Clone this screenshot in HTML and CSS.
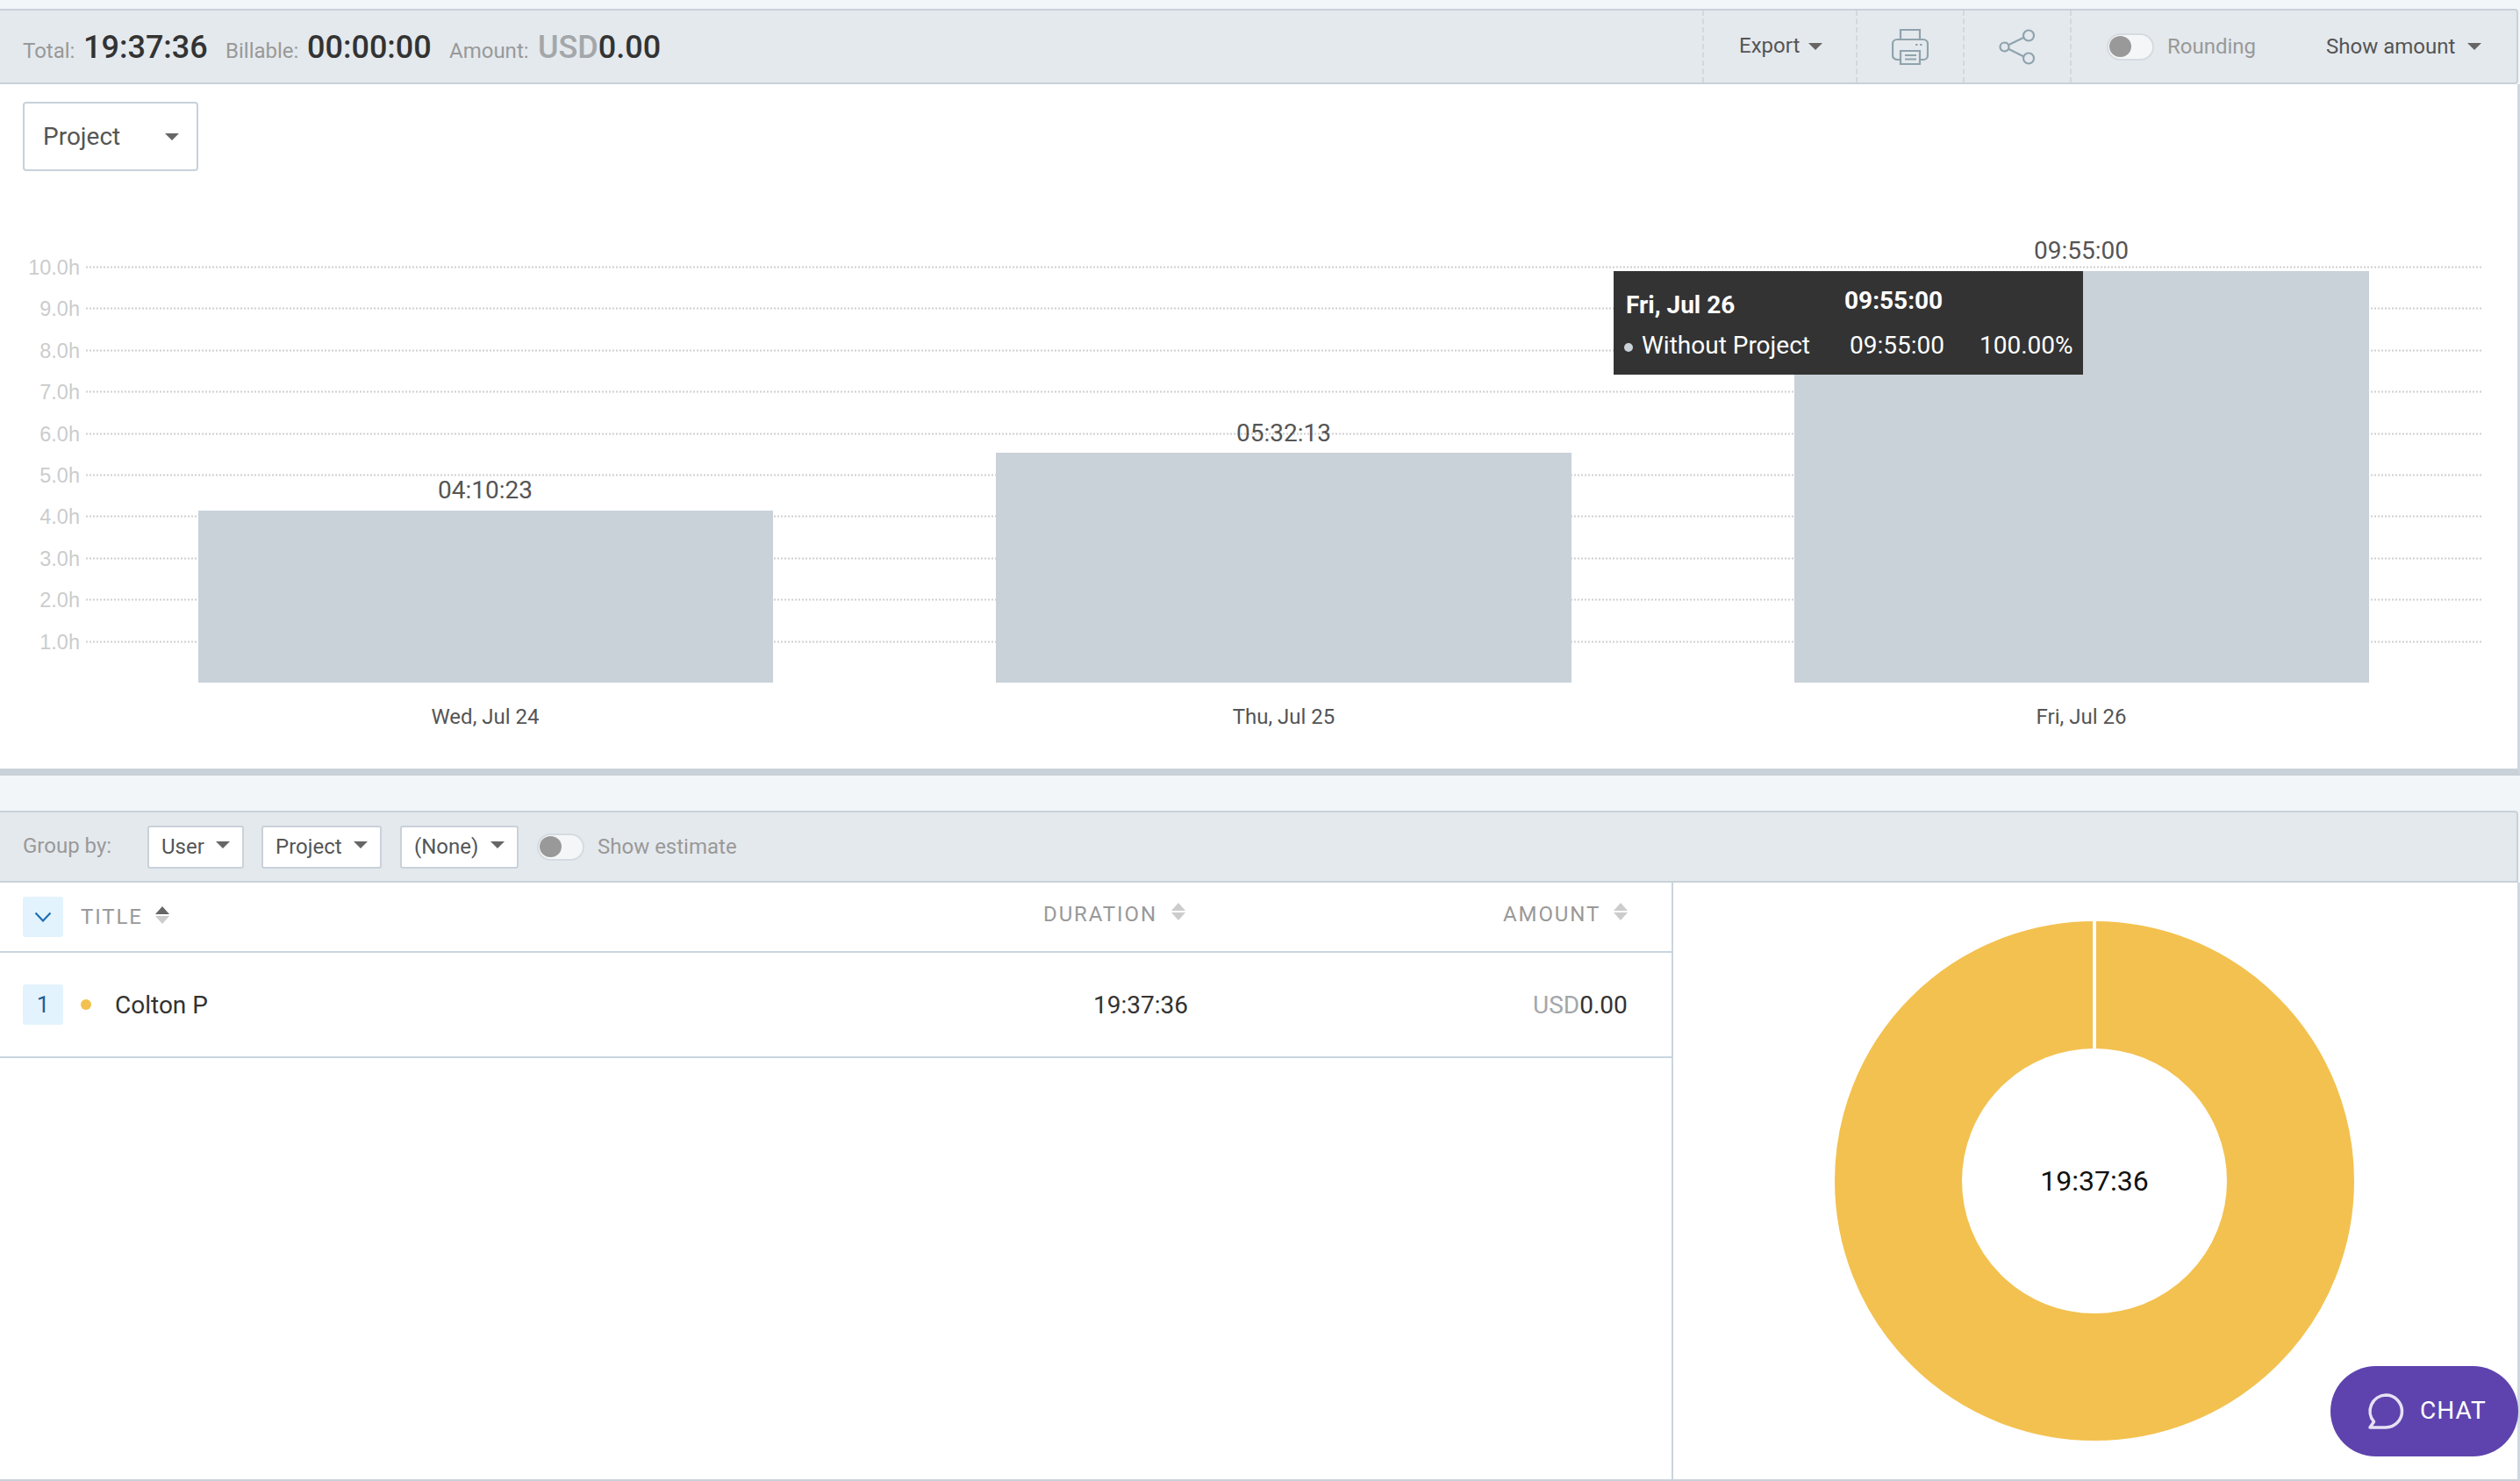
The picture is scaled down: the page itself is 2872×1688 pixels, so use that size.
FILE: index.html
```html
<!DOCTYPE html>
<html lang="en">
<head>
<meta charset="utf-8">
<title>Report</title>
<link rel="stylesheet" href="styles.css">
</head>
<body>
<div class="page">
  <header class="summary-bar">
    <div class="totals">
      <span class="lbl lbl-total">Total:</span><b class="val val-total">19:37:36</b>
      <span class="lbl lbl-bill">Billable:</span><b class="val val-bill">00:00:00</b>
      <span class="lbl lbl-amount">Amount:</span><b class="val val-amount"><span class="cur">USD</span>0.00</b>
    </div>
    <div class="tools">
      <div class="tool tool-export"><span class="export-text">Export</span><i class="caret caret-export"></i></div>
      <div class="tool tool-print">
        <svg class="ic" width="42" height="41" viewBox="-1 -1 42 41" fill="none" stroke="#8fa3ad" stroke-width="2.200">
          <path d="M9 11V0h22v11"/>
          <path d="M9 34H5a5 5 0 0 1-5-5V16a5 5 0 0 1 5-5h30a5 5 0 0 1 5 5v13a5 5 0 0 1-5 5h-4"/>
          <path d="M9 24h22v15H9z"/>
          <path d="M14 29h13M14 33.500h13M26 17h2.500M31 17h2.500"/>
        </svg>
      </div>
      <div class="tool tool-share">
        <svg class="ic" width="42" height="41" viewBox="-1 -1 42 41" fill="none" stroke="#8fa3ad" stroke-width="2.200">
          <circle cx="5.500" cy="19.500" r="5"/>
          <circle cx="33" cy="6.500" r="6"/>
          <circle cx="33" cy="32.500" r="6"/>
          <path d="M10.500 17 27.500 8.700M10.500 22 27.500 30.500"/>
        </svg>
      </div>
      <div class="tool-right">
        <span class="toggle"><i></i></span><span class="toggle-label">Rounding</span>
        <span class="show-amount">Show amount</span><i class="caret caret-show"></i>
      </div>
    </div>
  </header>

  <section class="chart-card">
    <div class="chart-select"><span>Project</span><i class="caret"></i></div>
    <svg class="chart" width="2868" height="680" viewBox="0 196 2868 680">
      <g class="grid">
        <path d="M98 304.500H2828M98 351.500H2828M98 399.500H2828M98 446.500H2828M98 494.500H2828M98 541.500H2828M98 588.500H2828M98 636.500H2828M98 683.500H2828M98 731.500H2828"/>
      </g>
      <g class="axis">
        <text x="91" y="313">10.0h</text>
        <text x="91" y="360">9.0h</text>
        <text x="91" y="408">8.0h</text>
        <text x="91" y="455">7.0h</text>
        <text x="91" y="503">6.0h</text>
        <text x="91" y="550">5.0h</text>
        <text x="91" y="597">4.0h</text>
        <text x="91" y="645">3.0h</text>
        <text x="91" y="692">2.0h</text>
        <text x="91" y="740">1.0h</text>
      </g>
      <rect class="bar" x="226" y="582" width="655" height="196"/>
      <rect class="bar" x="1135" y="516" width="656" height="262"/>
      <rect class="bar" x="2045" y="309" width="655" height="469"/>
      <g class="bar-val">
        <text x="553" y="568">04:10:23</text>
        <text x="1463" y="503">05:32:13</text>
        <text x="2372" y="295">09:55:00</text>
      </g>
      <g class="bar-cat">
        <text x="553" y="825">Wed, Jul 24</text>
        <text x="1463" y="825">Thu, Jul 25</text>
        <text x="2372" y="825">Fri, Jul 26</text>
      </g>
    </svg>
    <div class="tooltip">
      <div class="tt-row tt-head"><span class="tt-date">Fri, Jul 26</span><span class="tt-time">09:55:00</span></div>
      <div class="tt-row tt-body"><i class="tt-dot"></i><span class="tt-name">Without Project</span><span class="tt-time2">09:55:00</span><span class="tt-pct">100.00%</span></div>
    </div>
  </section>

  <div class="gap"></div>

  <section class="group-bar">
    <span class="group-label">Group by:</span>
    <div class="mini-select ms-user"><span>User</span><i class="caret"></i></div>
    <div class="mini-select ms-project"><span>Project</span><i class="caret"></i></div>
    <div class="mini-select ms-none"><span>(None)</span><i class="caret"></i></div>
    <span class="toggle toggle-est"><i></i></span><span class="toggle-label">Show estimate</span>
  </section>

  <section class="results">
    <div class="table">
      <div class="thead">
        <span class="square"><svg width="20" height="12" viewBox="0 0 20 12" fill="none" stroke="#1f6fb5" stroke-width="2.200"><path d="M1.500 1.500 10 10.500l8.500-9"/></svg></span>
        <span class="th th-title">TITLE</span>
        <span class="sort sort-active"><i class="up"></i><i class="down"></i></span>
        <span class="th th-duration">DURATION</span>
        <span class="sort sort-high"><i class="up"></i><i class="down"></i></span>
        <span class="th th-amount">AMOUNT</span>
        <span class="sort sort-high"><i class="up"></i><i class="down"></i></span>
      </div>
      <div class="trow">
        <span class="square num">1</span>
        <i class="user-dot"></i>
        <span class="user-name">Colton P</span>
        <span class="cell-duration">19:37:36</span>
        <span class="cell-amount"><span class="cur">USD</span>0.00</span>
      </div>
    </div>
    <div class="donut-pane">
      <svg class="donut" width="592" height="592" viewBox="0 0 592 592">
        <circle cx="296" cy="296" r="223.500" fill="none" stroke="#f3c14f" stroke-width="145"/>
        <path d="M296 0V145" stroke="#fff" stroke-width="4"/>
        <text x="296" y="307">19:37:36</text>
      </svg>
    </div>
  </section>
</div>

<button class="chat" type="button">
  <svg width="42" height="42" viewBox="0 0 42 42" fill="none" stroke="#e6e1f4" stroke-width="3.500" stroke-linejoin="round" stroke-linecap="round"><path d="M21 2a18.500 18.500 0 1 1 0 37H3l4.500-6.500A18.500 18.500 0 0 1 21 2z"/></svg>
  <span>CHAT</span>
</button>
</body>
</html>
```
FILE: styles.css
```css
* { box-sizing: border-box; }
html, body { margin: 0; padding: 0; height: 100%; }
body { background: #f2f6f9; font-family: Roboto, "Liberation Sans", sans-serif; color: #333; overflow: hidden; }
i { display: block; font-style: normal; }
.page { width: 2872px; height: 1688px; padding-top: 10px; display: flex; flex-direction: column; position: relative; }

.caret { width: 0; height: 0; border-left: 8px solid transparent; border-right: 8px solid transparent; border-top: 8px solid #666; }

.summary-bar { height: 86px; flex: none; margin-right: 2px; background: #e4e9ed; border-top: 2px solid #c9d1d9; border-bottom: 2px solid #c9d1d9; border-right: 2px solid #c9d1d9; border-top-right-radius: 4px; border-bottom-right-radius: 4px; display: flex; justify-content: space-between; }
.totals { padding-left: 26px; display: flex; align-items: baseline; padding-top: 21px; }
.lbl { font-size: 24px; color: #999; }
.val { font-size: 36px; font-weight: 500; color: #333; }
.cur { color: #a3a7aa; }
.lbl-total { width: 69px; }
.lbl-bill { width: 93px; margin-left: 22px; }
.lbl-amount { width: 101px; margin-left: 22px; }
.val-total, .val-bill { width: 140px; }

.tools { display: flex; height: 100%; width: 928px; }
.tool { border-left: 2px dashed #d3d8dc; display: flex; align-items: center; }
.tool-export { width: 175px; padding-left: 40px; }
.export-text { font-size: 24px; color: #555; width: 79px; padding-bottom: 3px; }
.tool-print { width: 122px; justify-content: center; }
.tool-share { width: 122px; justify-content: center; }
.tool-right { border-left: 2px dashed #d3d8dc; flex: 1; display: flex; align-items: center; padding-left: 40px; }
.toggle { width: 54px; height: 31px; border-radius: 16px; border: 2px solid #d5dbe0; background: #f5f6f8; display: block; padding: 1.500px 0 0 1px; flex: none; }
.toggle i { width: 25px; height: 24px; border-radius: 50%; background: #999; }
.toggle-label { font-size: 24px; color: #999; margin-left: 15px; }
.show-amount { font-size: 24px; color: #555; margin-left: 80px; }
.caret-show { margin-left: 14px; }

.chart-card { flex: none; background: #fff; border-right: 3px solid #cfd8e0; border-bottom: 8px solid #c9d1d9; position: relative; height: 788px; padding: 20px 0 0 26px; }
.chart-select { width: 200px; height: 79px; background: #fff; border: 2px solid #c9d1d9; border-radius: 4px; display: flex; align-items: center; justify-content: space-between; padding: 0 20px 0 21px; font-size: 28px; color: #555; }
.chart { display: block; position: absolute; left: 0; top: 100px; }
.grid path { stroke: #d0d0d0; stroke-width: 2; stroke-dasharray: 2 2; fill: none; }
.axis text { font-family: "Liberation Sans", Arial, sans-serif; font-size: 23.500px; fill: #ccc; text-anchor: end; }
.bar { fill: #c9d1d9; }
.bar-val text { font-size: 28px; fill: #555; text-anchor: middle; }
.bar-cat text { font-size: 24px; fill: #555; text-anchor: middle; }

.tooltip { position: absolute; left: 1839px; top: 213px; width: 535px; height: 118px; background: #333; color: #fff; font-size: 28px; }
.tt-row { position: absolute; left: 0; right: 0; display: flex; align-items: center; }
.tt-head { top: 13px; height: 40px; font-weight: 700; }
.tt-date { width: 263px; padding-left: 14px; padding-top: 10px; }
.tt-body { top: 64px; height: 40px; }
.tt-dot { width: 10px; height: 10px; border-radius: 50%; background: #c9d1d9; margin: 6px 10px 0 12px; }
.tt-name { width: 237px; }
.tt-time2 { width: 148px; }

.gap { height: 40px; flex: none; }

.group-bar { height: 82px; flex: none; margin-right: 2px; background: #e4e9ed; border-top: 2px solid #c9d1d9; border-bottom: 2px solid #c9d1d9; border-right: 2px solid #c9d1d9; border-top-right-radius: 4px; display: flex; align-items: center; padding: 0 0 0 26px; font-size: 24px; }
.group-label { width: 142px; color: #999; padding-bottom: 2px; }
.mini-select { height: 49px; background: #fff; border: 2px solid #c9d1d9; border-radius: 3px; display: flex; align-items: center; justify-content: space-between; color: #555; margin-right: 20px; padding: 0 14px 0 14px; }
.mini-select .caret { margin-bottom: 5px; }
.ms-user { width: 110px; }
.ms-project { width: 137px; }
.ms-none { width: 135px; margin-left: 1px; }
.toggle-est { margin-left: 1px; }

.results { flex: 1; display: flex; background: #fff; border-right: 3px solid #cfd8e0; border-bottom: 2px solid #c9d1d9; min-height: 0; }
.table { width: 1907px; flex: none; border-right: 2px solid #c9d5df; }
.thead { height: 80px; border-bottom: 2px solid #c9d5df; display: flex; align-items: center; padding-left: 26px; font-size: 24px; }
.square { width: 46px; height: 46px; border-radius: 3px; background: #e3f3fd; display: flex; align-items: center; justify-content: center; flex: none; }
.th { color: #999; letter-spacing: 1.900px; }
.th-title { margin-left: 20px; width: 85px; }
.th-duration { margin-left: 996px; width: 146px; padding-bottom: 6px; }
.th-amount { margin-left: 362px; width: 126px; padding-bottom: 6px; }
.sort { width: 16px; display: flex; flex-direction: column; gap: 2px; margin-top: -4px; }
.sort-high { margin-top: -12px; }
.sort .up { width: 0; height: 0; border-left: 8px solid transparent; border-right: 8px solid transparent; border-bottom: 9px solid #ccc; }
.sort .down { width: 0; height: 0; border-left: 8px solid transparent; border-right: 8px solid transparent; border-top: 9px solid #ccc; }
.sort-active .up { border-bottom-color: #666; }
.trow { height: 120px; border-bottom: 2px solid #c9d5df; display: flex; align-items: center; padding-left: 26px; font-size: 28px; }
.num { color: #1d5f96; font-size: 26px; }
.user-dot { width: 12px; height: 12px; border-radius: 50%; background: #f3c14f; margin-left: 20px; }
.user-name { margin-left: 27px; width: 1115px; color: #333; }
.cell-duration { width: 106px; }
.cell-amount { margin-left: 395px; }

.donut-pane { flex: 1; padding: 44px 0 0 184px; }
.donut { display: block; }
.donut text { font-size: 32px; fill: #111; text-anchor: middle; }

.chat { position: fixed; left: 2656px; top: 1557px; width: 214px; height: 103px; border: 0; border-radius: 52px; background: #5e43ae; display: flex; align-items: center; padding: 0 0 0 42px; color: #fff; font-family: Roboto, sans-serif; font-size: 28px; font-weight: 400; letter-spacing: 1px; }
.chat span { margin-left: 18px; padding-bottom: 2px; }
```
